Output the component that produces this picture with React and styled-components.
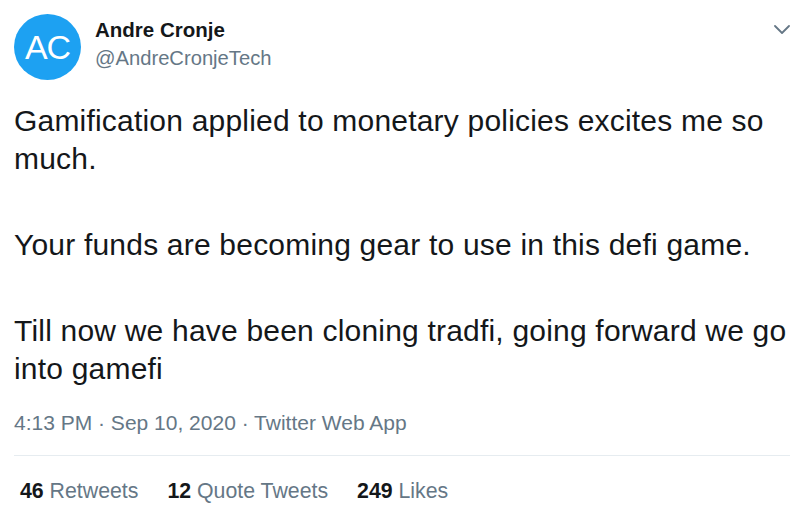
import React from "react";
import styled, { createGlobalStyle } from "styled-components";

const GlobalStyle = createGlobalStyle`
  body {
    margin: 0;
    background: #ffffff;
    font-family: "Liberation Sans", Arial, sans-serif;
  }
`;

const Card = styled.div`
  width: 800px;
  height: 515px;
  box-sizing: border-box;
  padding: 14px 10px 0 14px;
  overflow: hidden;
`;

const Header = styled.div`
  display: flex;
  align-items: flex-start;
`;

const Avatar = styled.div`
  width: 67px;
  height: 66px;
  border-radius: 50%;
  background: #1da1f2;
  color: #ffffff;
  display: flex;
  align-items: center;
  justify-content: center;
  font-size: 34px;
  letter-spacing: -1px;
  flex-shrink: 0;
`;

const Names = styled.div`
  margin-left: 14px;
  padding-top: 2px;
  flex: 1;
`;

const Name = styled.div`
  font-size: 20.5px;
  font-weight: 700;
  color: #14171a;
  line-height: 28px;
`;

const Handle = styled.div`
  font-size: 20.2px;
  color: #657786;
  line-height: 28px;
`;

const Chevron = styled.div`
  padding-top: 11px;
  line-height: 0;
`;

const Body = styled.div`
  margin-top: 22px;
  font-size: 30px;
  line-height: 38px;
  letter-spacing: 0.2px;
  color: #14171a;
`;

const Para = styled.p`
  margin: 0 0 48px;
  &:last-child {
    margin-bottom: 0;
  }
`;

const Meta = styled.div`
  margin-top: 22px;
  font-size: 21px;
  color: #657786;
  line-height: 26px;
`;

const Divider = styled.div`
  margin-top: 19px;
  height: 1px;
  background: #e6ecf0;
`;

const Stats = styled.div`
  display: flex;
  gap: 29px;
  padding: 22px 0 0 6px;
  font-size: 21.3px;
  line-height: 26px;
`;

const Stat = styled.span`
  color: #657786;
  b {
    color: #14171a;
    font-weight: 700;
  }
`;

export default function App() {
  return (
    <>
      <GlobalStyle />
      <Card>
        <Header>
          <Avatar>AC</Avatar>
          <Names>
            <Name>Andre Cronje</Name>
            <Handle>@AndreCronjeTech</Handle>
          </Names>
          <Chevron>
            <svg width="16" height="9" viewBox="0 0 16 9" fill="none">
              <path d="M1 1 L8 8 L15 1" stroke="#657786" strokeWidth="1.8" strokeLinecap="round" strokeLinejoin="round" />
            </svg>
          </Chevron>
        </Header>
        <Body>
          <Para>Gamification applied to monetary policies excites me so much.</Para>
          <Para>Your funds are becoming gear to use in this defi game.</Para>
          <Para>Till now we have been cloning tradfi, going forward we go into gamefi</Para>
        </Body>
        <Meta>4:13 PM · Sep 10, 2020 · Twitter Web App</Meta>
        <Divider />
        <Stats>
          <Stat><b>46</b> Retweets</Stat>
          <Stat><b>12</b> Quote Tweets</Stat>
          <Stat><b>249</b> Likes</Stat>
        </Stats>
      </Card>
    </>
  );
}
